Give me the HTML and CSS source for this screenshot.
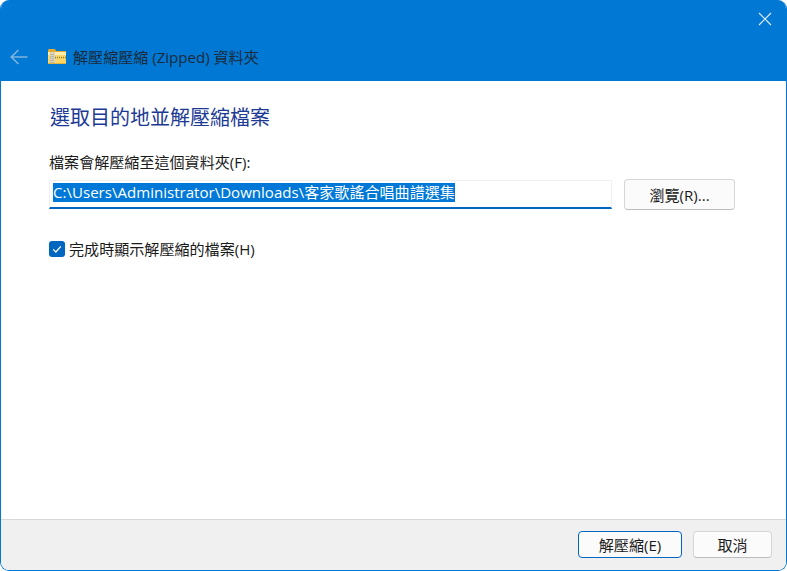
FILE: index.html
```html
<!DOCTYPE html>
<html lang="zh-Hant">
<head>
<meta charset="utf-8">
<title>解壓縮壓縮 (Zipped) 資料夾</title>
<link rel="stylesheet" href="styles.css">
</head>
<body>
<div class="window">
  <header class="titlebar">
    <div class="close-row">
      <svg class="close" width="14" height="14" viewBox="0 0 14 14"><path d="M1 1L13 13M13 1L1 13" stroke="#dcedfa" stroke-width="1.2" fill="none"/></svg>
    </div>
    <div class="nav-row">
      <svg class="back" width="18" height="16" viewBox="0 0 18 16"><path d="M1.2 8H17.5M8.5 1L1.2 8L8.5 15" stroke="#7fb4de" stroke-width="1.6" fill="none"/></svg>
      <svg class="folder" width="18" height="16" viewBox="0 0 18 16">
        <path d="M0 1.5C0 .7.5 0 1.3 0H6.5L8.5 2H18V5H0Z" fill="#e8ab2c"/>
        <rect x="0" y="3" width="18" height="12" fill="#fcd765"/>
        <rect x="0" y="3" width="18" height="3" fill="#fdeeb0"/>
        <rect x="2" y="3" width="5" height="12" fill="#d8d4bd"/>
        <path d="M3 5v10M5 5v10" stroke="#9b9785" stroke-width="1" stroke-dasharray="1 1"/>
        <path d="M7 8.5h11" stroke="#8f7a3a" stroke-width="1.4" stroke-dasharray="1 1"/>
        <rect x="0" y="14" width="18" height="1" fill="#e5b23f"/>
      </svg>
      <span class="title">解壓縮壓縮 (Zipped) 資料夾</span>
    </div>
  </header>
  <main class="content">
    <h1 class="heading">選取目的地並解壓縮檔案</h1>
    <label class="field-label">檔案會解壓縮至這個資料夾(F):</label>
    <div class="path-row">
      <div class="path-input"><span class="selected">C:\Users\Administrator\Downloads\客家歌謠合唱曲譜選集</span></div>
      <div class="btn browse">瀏覽(R)...</div>
    </div>
    <div class="check-row">
      <span class="checkbox"><svg width="12" height="12" viewBox="0 0 12 12"><path d="M2.2 6.4L4.9 9L9.8 3.4" stroke="#fff" stroke-width="1.3" fill="none"/></svg></span>
      <span class="check-label">完成時顯示解壓縮的檔案(H)</span>
    </div>
  </main>
  <footer class="footer">
    <div class="btn primary">解壓縮(E)</div>
    <div class="btn cancel">取消</div>
  </footer>
</div>
</body>
</html>
```
FILE: styles.css
```css
* { box-sizing: border-box; }
html, body { margin: 0; height: 100%; background: #fff; }
body { font-family: "Open Sans", "Noto Sans CJK TC", sans-serif; font-size: 15.07px; color: #1a1a1a; overflow: hidden; }
.window {
  width: 787px; height: 571px;
  display: flex; flex-direction: column;
  border: solid #0078d4; border-width: 0 1px 1px 1px;
  border-radius: 9px;
  background: #fff; overflow: hidden;
}
.titlebar { height: 81px; background: #0078d4; margin: 0 -1px; flex: none; }
.close-row { height: 38px; display: flex; justify-content: flex-end; padding: 12px 15px 0 0; }
.nav-row { height: 38px; display: flex; align-items: center; padding-left: 10px; }
.folder { margin-left: 20px; margin-right: 7px; }
.title { color: #1b2a3a; line-height: 38px; }
.content { flex: 1; padding: 0 51px 0 48px; }
.heading { margin: 23px 0 0 1px; font-size: 20px; font-weight: 400; color: #1c3a94; line-height: 28px; height: 28px; }
.field-label { display: block; margin: 20px 0 0 0; line-height: 20px; height: 20px; }
.path-row { display: flex; gap: 12px; margin-top: 7px; }
.path-input { width: 563px; height: 29px; margin-top: 1px; border: 1px solid #f0f0f0; border-bottom: 2px solid #0067c0; padding: 2px 0 0 3px; background: #fff; }
.selected { display: block; width: max-content; background: #0078d7; color: #fff; height: 19px; line-height: 19px; white-space: nowrap; }
.btn { display: flex; align-items: center; justify-content: center; background: #fbfbfb; border: 1px solid #d6d6d6; border-bottom-color: #bdbdbd; border-radius: 4px; }
.browse { width: 111px; height: 31px; }
.check-row { display: flex; align-items: center; gap: 4px; margin-top: 30px; }
.checkbox { width: 16px; height: 16px; border-radius: 3px; background: #0067c0; display: flex; align-items: center; justify-content: center; }
.check-label { line-height: 18px; }
.footer { height: 51px; flex: none; background: #f0f0f0; border-top: 1px solid #d8d8d8; display: flex; justify-content: flex-end; gap: 11px; padding: 11px 14px 0 0; }
.primary { width: 104px; height: 27px; border: 1px solid #0067c0; }
.cancel { width: 79px; height: 27px; }
```
